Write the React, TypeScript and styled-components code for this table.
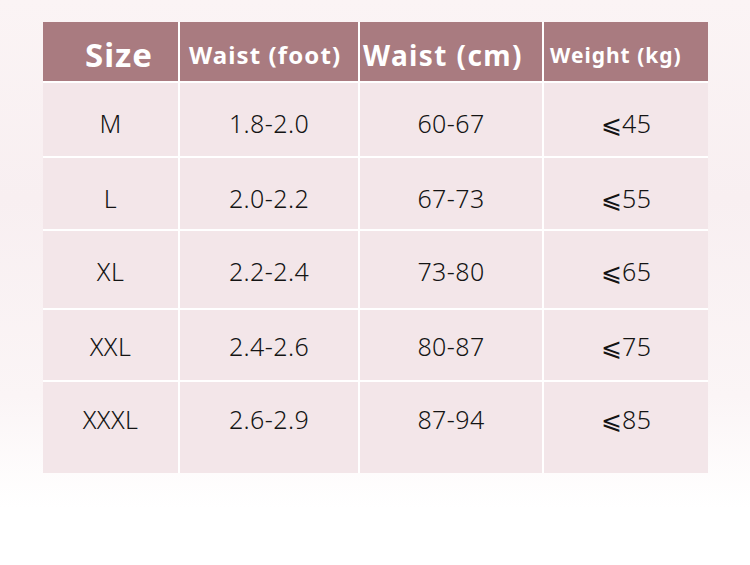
import styled, { createGlobalStyle } from "styled-components";

const GlobalStyle = createGlobalStyle`
  html, body {
    margin: 0;
    padding: 0;
    background: #ffffff;
  }
`;

const Page = styled.div`
  width: 750px;
  height: 565px;
  box-sizing: border-box;
  padding: 22px 42px 0 43px;
  background: linear-gradient(
    180deg,
    #fbf4f5 0%,
    #f8eff1 35%,
    #fbf5f6 70%,
    #ffffff 90%
  );
  overflow: hidden;
`;

const Table = styled.div`
  display: grid;
  grid-template-columns: 135px 178px 182px 164px;
  grid-template-rows: 59px 73px 71px 77px 70px 91px;
  gap: 2px;
  width: 665px;
  background: #ffffff;
`;

const HeadCell = styled.div<{ $size: number; $indent: number; $spacing: number }>`
  background: #a97b80;
  color: #ffffff;
  font-family: "Noto Sans", "Open Sans", sans-serif;
  font-weight: 700;
  font-size: ${(p) => p.$size}px;
  letter-spacing: ${(p) => p.$spacing}px;
  display: flex;
  align-items: center;
  padding-left: ${(p) => p.$indent}px;
  padding-top: 6px;
  white-space: nowrap;
`;

const Cell = styled.div<{ $top: number }>`
  background: #f3e6e9;
  color: #141414;
  font-family: "Noto Sans", "Open Sans", "DejaVu Sans", sans-serif;
  font-weight: 300;
  font-size: 25px;
  line-height: 28px;
  text-align: center;
  padding-top: ${(p) => p.$top}px;
  letter-spacing: 0.4px;
`;

const heads = [
  { label: "Size", size: 33, indent: 42, spacing: 1 },
  { label: "Waist (foot)", size: 24, indent: 9, spacing: 1.1 },
  { label: "Waist (cm)", size: 28, indent: 3, spacing: 1.4 },
  { label: "Weight (kg)", size: 21, indent: 6, spacing: 1 },
];

const rows = [
  { top: 26, cells: ["M", "1.8-2.0", "60-67", "⩽45"] },
  { top: 26, cells: ["L", "2.0-2.2", "67-73", "⩽55"] },
  { top: 26, cells: ["XL", "2.2-2.4", "73-80", "⩽65"] },
  { top: 22, cells: ["XXL", "2.4-2.6", "80-87", "⩽75"] },
  { top: 23, cells: ["XXXL", "2.6-2.9", "87-94", "⩽85"] },
];

export default function App() {
  return (
    <>
      <GlobalStyle />
      <Page>
        <Table>
          {heads.map((h) => (
            <HeadCell
              key={h.label}
              $size={h.size}
              $indent={h.indent}
              $spacing={h.spacing}
            >
              {h.label}
            </HeadCell>
          ))}
          {rows.map((r) =>
            r.cells.map((v, i) => (
              <Cell key={r.cells[0] + i} $top={r.top}>
                {v}
              </Cell>
            ))
          )}
        </Table>
      </Page>
    </>
  );
}
